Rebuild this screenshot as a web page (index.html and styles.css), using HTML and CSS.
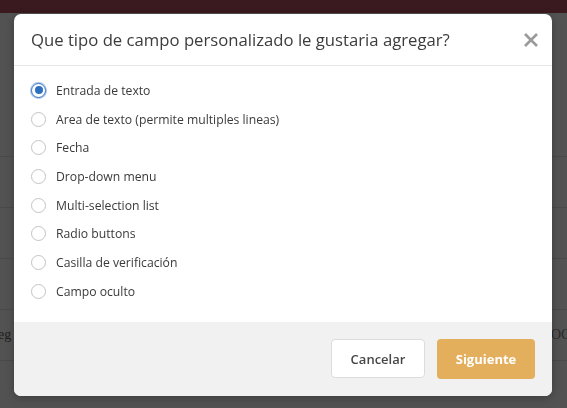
FILE: index.html
```html
<!DOCTYPE html>
<html lang="es">
  <head>
    <meta charset="UTF-8" />
    <meta name="viewport" content="width=device-width, initial-scale=1.0" />
    <title>Campo personalizado</title>
    <link rel="stylesheet" href="styles.css">
  </head>
  <body>
    <div class="topbar"></div>
    <div class="page">
      <div class="row"></div>
      <div class="row"></div>
      <div class="row"></div>
      <div class="row"></div>
      <div class="row text-row"><span class="left-text">eg</span><span class="right-text">OCI</span></div>
    </div>

    <div class="overlay">
      <div class="modal">
        <div class="modal-header">
          <h2>Que tipo de campo personalizado le gustaria agregar?</h2>
          <button class="close" aria-label="Cerrar">
            <svg width="16" height="16" viewBox="0 0 16 16">
              <path d="M2 2 L14 14 M14 2 L2 14" stroke="#9a9a9a" stroke-width="2.6" stroke-linecap="butt" fill="none" />
            </svg>
          </button>
        </div>
        <form class="modal-body">
          <label class="option"><input type="radio" name="tipo" checked /><span class="dot"></span>Entrada de texto</label>
          <label class="option"><input type="radio" name="tipo" /><span class="dot"></span>Area de texto (permite multiples lineas)</label>
          <label class="option"><input type="radio" name="tipo" /><span class="dot"></span>Fecha</label>
          <label class="option"><input type="radio" name="tipo" /><span class="dot"></span>Drop-down menu</label>
          <label class="option"><input type="radio" name="tipo" /><span class="dot"></span>Multi-selection list</label>
          <label class="option"><input type="radio" name="tipo" /><span class="dot"></span>Radio buttons</label>
          <label class="option"><input type="radio" name="tipo" /><span class="dot"></span>Casilla de verificación</label>
          <label class="option"><input type="radio" name="tipo" /><span class="dot"></span>Campo oculto</label>
        </form>
        <div class="modal-footer">
          <button class="btn btn-cancel">Cancelar</button>
          <button class="btn btn-next">Siguiente</button>
        </div>
      </div>
    </div>
  </body>
</html>
```

FILE: styles.css
```css
html,
body {
  margin: 0;
  height: 100%;
}
body {
  font-family: "Open Sans", Arial, sans-serif;
  background-color: #525252;
  overflow: hidden;
}
.topbar {
  height: 13px;
  background-color: #3a1a1e;
}
.page {
  padding-top: 93px;
}
.row {
  height: 50px;
  border-bottom: 1px solid #4a4a4a;
}
.text-row {
  display: flex;
  justify-content: space-between;
  align-items: center;
  font-family: "Liberation Serif", serif;
  font-size: 14px;
  color: #1e1e1e;
}
.left-text {
  margin-left: -2px;
}
.right-text {
  margin-right: -8px;
  color: #2a2a2a;
}
.overlay {
  position: fixed;
  inset: 0;
  padding: 14px 15px 12px 14px;
}
.modal {
  height: 382px;
  background-color: #fff;
  border-radius: 7px;
  display: flex;
  flex-direction: column;
  overflow: hidden;
  box-shadow: 0 2px 8px rgba(0, 0, 0, 0.25);
}
.modal-header {
  height: 51px;
  display: flex;
  align-items: center;
  justify-content: space-between;
  padding: 0 13px 0 17px;
  border-bottom: 1px solid #e6e6e6;
}
.modal-header h2 {
  margin: 0;
  font-size: 16.7px;
  font-weight: 400;
  color: #3c3c3c;
}
.close {
  background: none;
  border: none;
  padding: 0;
  cursor: pointer;
  display: flex;
  margin-top: 1px;
}
.modal-body {
  flex: 1;
  padding: 10px 0 0 17px;
  margin: 0;
}
.option {
  display: flex;
  align-items: center;
  height: 28.7px;
  font-size: 12.2px;
  color: #3a3a3a;
  cursor: pointer;
}
.option input {
  display: none;
}
.dot {
  width: 13px;
  height: 13px;
  border: 1px solid #c4c4c4;
  border-radius: 50%;
  margin: 0 10px 0 0;
  flex-shrink: 0;
  position: relative;
}
.option input:checked + .dot {
  border-color: #2e6fc0;
  box-shadow: 0 0 0 1px #a9c5ea;
}
.option input:checked + .dot::after {
  content: "";
  position: absolute;
  left: 2.5px;
  top: 2.5px;
  width: 8px;
  height: 8px;
  border-radius: 50%;
  background-color: #2e6fc0;
}
.modal-footer {
  height: 73px;
  background-color: #f1f1f1;
  display: flex;
  align-items: center;
  justify-content: flex-end;
  gap: 12px;
  padding: 0 17px 1px 0;
}
.btn {
  font-family: "Open Sans", Arial, sans-serif;
  font-size: 13px;
  font-weight: 600;
  border-radius: 4px;
  cursor: pointer;
}
.btn-cancel {
  width: 94px;
  height: 39px;
  background-color: #fff;
  border: 1px solid #dcdcdc;
  color: #474747;
}
.btn-next {
  width: 98px;
  height: 40px;
  background-color: #e4af5c;
  border: none;
  color: #fff;
  font-weight: 700;
}
```
